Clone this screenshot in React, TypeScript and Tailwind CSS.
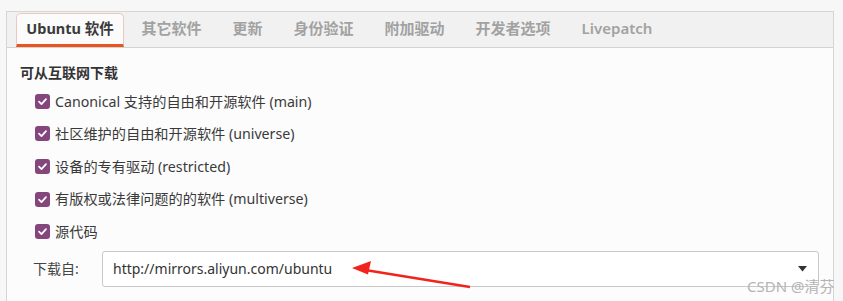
import React from 'react';

const tabs = ['Ubuntu 软件', '其它软件', '更新', '身份验证', '附加驱动', '开发者选项', 'Livepatch'];

const sources = [
  'Canonical 支持的自由和开源软件 (main)',
  '社区维护的自由和开源软件 (universe)',
  '设备的专有驱动 (restricted)',
  '有版权或法律问题的的软件 (multiverse)',
  '源代码',
];

function CheckBox() {
  return (
    <span className="flex h-[15px] w-[15px] shrink-0 items-center justify-center rounded-[3px] bg-[#84467d]">
      <svg width="11" height="11" viewBox="0 0 12 12" fill="none">
        <path d="M2.2 6.2 L4.9 8.8 L9.8 3.4" stroke="#fff" strokeWidth="1.9" strokeLinecap="round" strokeLinejoin="round" />
      </svg>
    </span>
  );
}

export default function App() {
  return (
    <div
      className="relative h-[301px] w-[843px] overflow-hidden bg-[#f7f7f7] pl-[6px] pr-[9px] pt-[11px] text-[#3c3c3c]"
      style={{ fontFamily: '"Noto Sans", "Noto Sans CJK SC", sans-serif' }}
    >
      <div className="flex h-full flex-col border-l border-r border-t border-[#d6d6d6] bg-[#fcfcfc]">
        {/* tab strip */}
        <div className="flex h-[36px] shrink-0 items-end border-b border-[#d2d2d2] bg-[#f1f1f1] pl-[9px]">
          {tabs.map((t, i) =>
            i === 0 ? (
              <div
                key={t}
                className="mr-[2px] flex h-[34px] w-[108px] items-center justify-center rounded-t-[5px] border-l border-r border-t border-[#e8c9c0] bg-[#fbfbfb] border-b-[3px] border-b-[#e95420] text-[14.5px] font-bold text-[#3a3a3a]"
              >
                {t}
              </div>
            ) : (
              <div key={t} className="flex h-[34px] items-center px-[15.5px] pb-[3px] text-[15px] font-semibold text-[#a2a2a2]">
                {t}
              </div>
            ),
          )}
        </div>

        {/* content */}
        <div className="flex flex-col pl-[13px] pr-[14px] pt-[13px]">
          <div className="text-[14px] font-bold leading-[24px] text-[#333]">可从互联网下载</div>
          <div className="flex flex-col pl-[15px]">
            {sources.map((s) => (
              <div key={s} className="flex h-[32.6px] items-center gap-[5px] text-[14.2px] text-[#3a3a3a]">
                <CheckBox />
                <span>{s}</span>
              </div>
            ))}
          </div>
          <div className="mt-[3px] flex items-center pl-[13px]">
            <span className="w-[69px] text-[14px] text-[#444]">下载自:</span>
            <div className="flex h-[36px] flex-1 items-center justify-between rounded-[3px] border border-[#c8c8c8] bg-white pl-[10px] pr-[11px]">
              <span className="text-[14px] text-[#333]">http://mirrors.aliyun.com/ubuntu</span>
              <svg width="9" height="6" viewBox="0 0 9 6">
                <path d="M0 0 L9 0 L4.5 5.5 Z" fill="#333" />
              </svg>
            </div>
          </div>
        </div>
      </div>

      {/* red annotation arrow */}
      <svg className="pointer-events-none absolute left-0 top-0" width="843" height="301" viewBox="0 0 843 301">
        <line x1="470" y1="287" x2="362" y2="269.5" stroke="#f2231c" strokeWidth="2.4" />
        <path d="M352 268 L371 261 L368 274.5 Z" fill="#f2231c" />
      </svg>

      {/* watermark */}
      <div className="pointer-events-none absolute left-[747px] top-[276px] text-[15px] leading-[20px] text-[#b4b4b4]">
        CSDN @清芬
      </div>
    </div>
  );
}
